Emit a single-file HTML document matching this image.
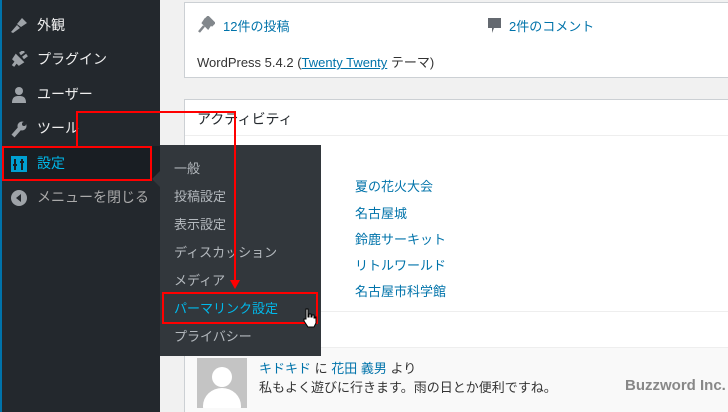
<!DOCTYPE html>
<html style="width:728px;height:412px;overflow:hidden"><head><meta charset="utf-8"><style>
*{margin:0;padding:0;box-sizing:border-box}
body{width:728px;height:412px;overflow:hidden;background:#f1f1f1;font-family:"Liberation Sans","Noto Sans CJK JP",sans-serif;font-size:13px;position:relative}
.abs{position:absolute}
#side{left:0;top:0;width:160px;height:412px;background:#23282d}
.mi{position:absolute;left:0;width:160px;height:34px;color:#eee;font-size:14px;line-height:34px;padding-left:37px}
.mi svg{position:absolute;left:10px;top:9px}
.card{background:#fff;border:1px solid #ccd0d4;border-right:none;position:absolute;left:184px;width:544px;overflow:hidden}
a{color:#0073aa;text-decoration:none}
.sub{left:160px;top:145px;width:161px;height:211px;background:#32373c}
.si{position:absolute;left:14px;color:#b4b9be;font-size:13px}
.red{position:absolute;border:2px solid #f00}
</style></head><body>
<div class="abs" style="left:0;top:0;width:2px;height:412px;background:#0073aa;z-index:2"></div>
<div id="side" class="abs">
<div class="mi" style="top:8px"><svg width="18" height="16" viewBox="0 0 18 16"><path d="M1 15l6-7 3 3-7 5zM7 7l5-6 5 5-6 4z" fill="#9ea3a8"/></svg>外観</div>
<div class="mi" style="top:42px"><svg width="18" height="16" viewBox="0 0 18 16"><path d="M3 15l3-4 M6 5l6 6-3 2-5-5z M10 3l4-3 M13 7l4-3" stroke="#9ea3a8" stroke-width="3" fill="#9ea3a8"/></svg>プラグイン</div>
<div class="mi" style="top:77px"><svg width="18" height="18" viewBox="0 0 18 18"><circle cx="9" cy="5" r="4" fill="#9ea3a8"/><path d="M2 17c0-6 3-7 7-7s7 1 7 7z" fill="#9ea3a8"/></svg>ユーザー</div>
<div class="mi" style="top:111px"><svg width="18" height="18" viewBox="0 0 18 18"><path d="M3 16L10 8" stroke="#9ea3a8" stroke-width="4"/><circle cx="12" cy="6" r="4.5" fill="#9ea3a8"/><circle cx="14" cy="4" r="2" fill="#23282d"/></svg>ツール</div>
<div class="mi" style="top:146px;background:#191e23;color:#00b9eb"><svg width="18" height="18" viewBox="0 0 18 18"><rect x="1" y="1" width="16" height="16" fill="#00a0d2"/><path d="M5 4v11M12 4v11" stroke="#191e23" stroke-width="2"/><path d="M3 10h4M10 7h4" stroke="#191e23" stroke-width="2"/></svg>設定</div>
<div class="mi" style="top:180px;color:#aaa"><svg width="18" height="18" viewBox="0 0 18 18"><circle cx="9" cy="9" r="8" fill="#9ea3a8"/><path d="M11 5l-5 4 5 4z" fill="#23282d"/></svg>メニューを閉じる</div>
</div>
<div class="card" style="top:2px;height:76px">
<svg class="abs" style="left:12px;top:13px" width="18" height="18" viewBox="0 0 18 18"><path d="M2 16l5-6M6 7l5 5 2-3-5-5zM9 3l6 6 2-2-6-6z" stroke="#82878c" stroke-width="2.5" fill="#82878c"/></svg>
<a class="abs" style="left:38px;top:13px">12件の投稿</a>
<svg class="abs" style="left:302px;top:14px" width="16" height="17" viewBox="0 0 16 17"><path d="M1 1h13v10H7l-2 5V11H1z" fill="#646970"/></svg>
<a class="abs" style="left:324px;top:13px">2件のコメント</a>
<div class="abs" style="left:12px;top:49px;color:#333">WordPress 5.4.2 (<a style="text-decoration:underline">Twenty Twenty</a> テーマ)</div>
</div>
<div class="card" style="top:99px;height:313px;border-bottom:none">
<div class="abs" style="left:0;top:0;width:544px;height:36px;border-bottom:1px solid #eee;padding:9px 12px;font-size:14px;color:#23282d">アクティビティ</div>
<a class="abs" style="left:170px;top:76px">夏の花火大会</a>
<a class="abs" style="left:170px;top:103px">名古屋城</a>
<a class="abs" style="left:170px;top:129px">鈴鹿サーキット</a>
<a class="abs" style="left:170px;top:155px">リトルワールド</a>
<a class="abs" style="left:170px;top:181px">名古屋市科学館</a>
<div class="abs" style="left:0;top:211px;width:544px;height:1px;background:#eee"></div>
<div class="abs" style="left:0;top:247px;width:544px;height:66px;background:#f9f9f9;border-top:1px solid #eee"></div>
<div class="abs" style="left:12px;top:258px;width:50px;height:50px;background:#c4c4c4;overflow:hidden"><div class="abs" style="left:15px;top:9px;width:20px;height:20px;border-radius:50%;background:#fff"></div><div class="abs" style="left:6px;top:30px;width:38px;height:36px;border-radius:50%;background:#fff"></div></div>
<div class="abs" style="left:74px;top:258px;color:#333"><a>キドキド</a> に <a>花田 義男</a> より</div>
<div class="abs" style="left:74px;top:277px;color:#333">私もよく遊びに行きます。雨の日とか便利ですね。</div>
</div>
<div class="abs" style="left:625px;top:377px;color:#888;font-size:15px;font-weight:bold">Buzzword Inc.</div>
<div class="abs sub">
<div class="abs" style="left:-8px;top:26px;width:0;height:0;border:8px solid transparent;border-left:0;border-right-color:#32373c"></div>
<div class="si" style="top:13px">一般</div>
<div class="si" style="top:41px">投稿設定</div>
<div class="si" style="top:69px">表示設定</div>
<div class="si" style="top:97px">ディスカッション</div>
<div class="si" style="top:125px">メディア</div>
<div class="si" style="top:153px;color:#00b9eb">パーマリンク設定</div>
<div class="si" style="top:181px">プライバシー</div>
</div>
<div class="red" style="left:2px;top:146px;width:150px;height:35px"></div>
<div class="red" style="left:162px;top:292px;width:156px;height:32px"></div>
<div class="abs" style="left:76px;top:111px;width:2px;height:36px;background:#f00"></div>
<div class="abs" style="left:76px;top:111px;width:160px;height:2px;background:#f00"></div>
<div class="abs" style="left:234px;top:111px;width:2px;height:170px;background:#f00"></div>
<div class="abs" style="left:230px;top:280px;width:0;height:0;border-left:5px solid transparent;border-right:5px solid transparent;border-top:9px solid #f00"></div>
<svg class="abs" style="left:303px;top:308px" width="14" height="20" viewBox="0 0 14 20"><path d="M3 1h2v8h1V6h2v3h1V7h2v3h1V9h1v6l-2 4H5L1 13V11h2z" fill="#fff" stroke="#000"/></svg>
</body></html>
